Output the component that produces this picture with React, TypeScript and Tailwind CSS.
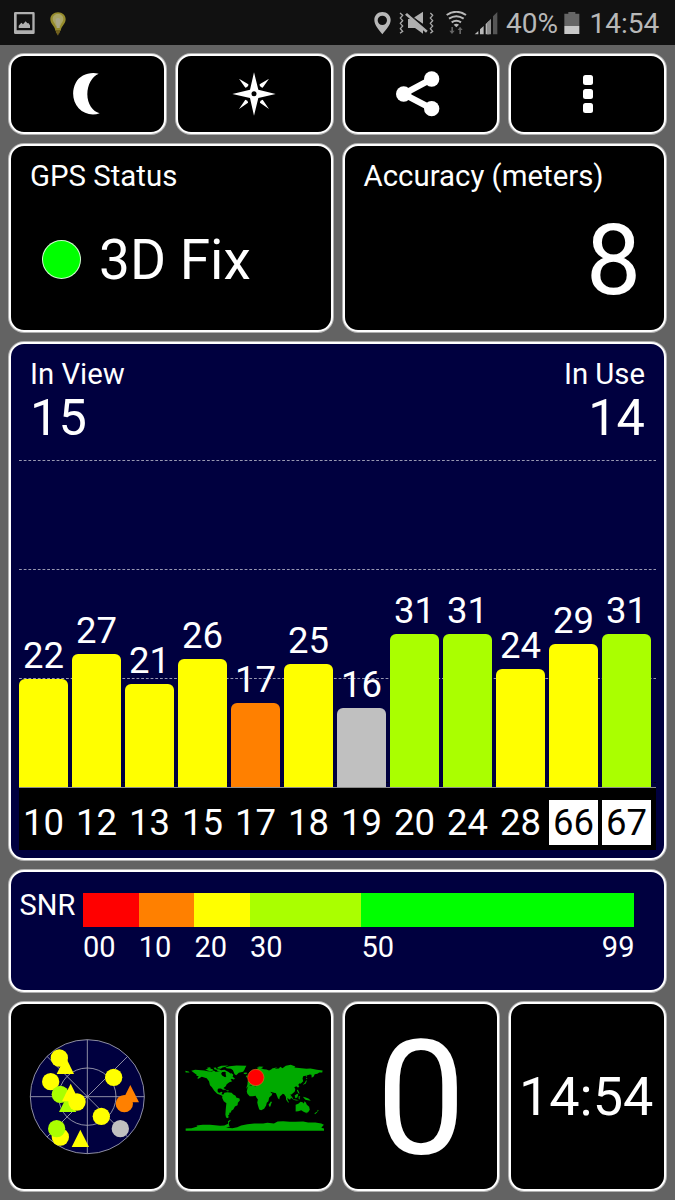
import type { ReactNode } from "react";
import clsx from "clsx";

// 4.95px per dB, so one grid step (22 dB) is 109px
const PX_PER_DB = 4.95;

const satellites = [
  { id: "10", snr: 22, color: "bg-[#ffff00]" },
  { id: "12", snr: 27, color: "bg-[#ffff00]" },
  { id: "13", snr: 21, color: "bg-[#ffff00]" },
  { id: "15", snr: 26, color: "bg-[#ffff00]" },
  { id: "17", snr: 17, color: "bg-[#ff8000]" },
  { id: "18", snr: 25, color: "bg-[#ffff00]" },
  { id: "19", snr: 16, color: "bg-[#c0c0c0]" },
  { id: "20", snr: 31, color: "bg-[#aaff00]" },
  { id: "24", snr: 31, color: "bg-[#aaff00]" },
  { id: "28", snr: 24, color: "bg-[#ffff00]" },
  { id: "66", snr: 29, color: "bg-[#ffff00]", glonass: true },
  { id: "67", snr: 31, color: "bg-[#aaff00]", glonass: true },
];

const legend = [
  { label: "00", color: "bg-[#ff0000]", width: "w-[55.7px]" },
  { label: "10", color: "bg-[#ff8000]", width: "w-[55.7px]" },
  { label: "20", color: "bg-[#ffff00]", width: "w-[55.7px]" },
  { label: "30", color: "bg-[#aaff00]", width: "w-[111.4px]" },
  { label: "50", color: "bg-[#00ff00]", width: "w-[273px]" },
];

function Panel({ className, children }: { className?: string; children: ReactNode }) {
  return (
    <div
      className={clsx(
        "rounded-[15px] border-2 border-white shadow-[0_0_0_1px_rgba(255,255,255,0.5)]",
        className
      )}
    >
      {children}
    </div>
  );
}

function StatusBar() {
  return (
    <div className="flex h-[45px] items-start bg-[#111111] pl-[14px] text-[28px] leading-none text-[#b8b8b8]">
      {/* Screenshot notification */}
      <svg className="mt-3 h-[22px] w-[21px]" viewBox="42 36 63 66">
        <path
          fill="#b0b0b0"
          fillRule="evenodd"
          d="M46 36h54q4 0 4 4v58q0 4-4 4H46q-4 0-4-4V40q0-4 4-4zM50 43v48h47V43z"
        />
        <path fill="#b0b0b0" d="M56 84v-7l8-9 5 5 8-9 5 6 3-1 5 7v8z" />
      </svg>
      {/* Light bulb notification */}
      <svg className="mt-3 ml-[15px] h-6 w-[16px]" viewBox="150 36 48 72">
        <path
          fill="#968c2c"
          d="M174 37c-13 0-23 9-23 21 0 8 4 13 9 20 3 4 5 8 6 14h16c1-6 3-10 6-14 5-7 9-12 9-20 0-12-10-21-23-21z"
        />
        <path fill="#aaa566" d="M174 42c-9 0-16 6-16 15 0 7 6 12 9 20h14c3-8 9-13 9-20 0-9-7-15-16-15z" />
        <path fill="#aaa78a" d="M167 57q7-6 14 0l-2 27h-9z" />
        <path fill="#71601e" d="M167 91h14l-2 8-3 2-1 5h-3l-1-5-3-2z" />
      </svg>

      {/* Location */}
      <svg className="mt-3 ml-[308px] h-[23px] w-[17px]" viewBox="104 36 51 69">
        <path
          fill="#b8b8b8"
          fillRule="evenodd"
          d="M129 36c-14 0-24 10-24 24 0 15 13 28 24 43 11-15 25-28 25-43 0-14-11-24-25-24zm0 11a14 14 0 1 1 0 28 14 14 0 0 1 0-28z"
        />
      </svg>
      {/* Vibrate / muted */}
      <svg className="mt-[11px] ml-2 h-6 w-[35px]" viewBox="178 33 105 72" fill="none">
        <path
          stroke="#a8a8a8"
          strokeWidth="4"
          d="M181 39l8 7-7 8 7 8-7 8 7 8-7 8 7 8-8 6M272 39l7 7-7 8 7 8-7 8 7 8-7 8 7 8-7 6"
        />
        <path fill="#b0b0b0" d="M205 57h5l40 24v20l-24-17h-21zM222 53l28-18v36zM196 44l6-5 62 53-5 6z" />
        <path stroke="#111111" strokeWidth="2" d="M205 37l60 51" />
      </svg>
      {/* Wi-Fi with traffic arrows */}
      <svg className="mt-[11px] ml-[12px] h-6 w-[21px]" viewBox="319 33 63 72" fill="none">
        <g stroke="#b8b8b8" strokeWidth="6">
          <path d="M321 45q29-19 58 0" />
          <path d="M328 56q22-15 44 0" />
          <path d="M336 67q14-10 28 0" />
        </g>
        <path fill="#b8b8b8" d="M342 74q8-6 16 0l-8 8z" />
        <path fill="#656565" d="M335 81h5v11h5l-8 10-8-10h6zM359 102h5V90h5l-8-10-7 10h5z" />
      </svg>
      {/* Mobile signal */}
      <svg className="mt-[11px] ml-[7px] h-6 w-[24px]" viewBox="402 33 72 72">
        <path fill="#b8b8b8" d="M404 103l11-10v10zM420 88l11-10v25h-11zM437 72l11-10v41h-11z" />
        <path fill="#8f8f8f" d="M441 68l12-12v47h-12z" />
        <path fill="#555555" d="M459 49l13-13v67h-13z" />
      </svg>
      <span className="mt-[10px] ml-[8px] w-[52px]">40%</span>
      <svg className="mt-3 ml-[6px] h-[22px] w-[16px]" viewBox="674 36 48 66">
        <path fill="#666666" d="M675 41h12v-5h21v5h12v37h-45z" />
        <path fill="#c8c8c8" d="M675 78h45v24h-45z" />
      </svg>
      <span className="mt-[10px] ml-[9.5px]">14:54</span>
    </div>
  );
}

function Toolbar() {
  return (
    <div className="grid grid-cols-4 gap-[10px]">
      <Panel className="flex h-20 items-center justify-center bg-black">
        <svg className="mr-px h-[42px] w-[27px]" viewBox="220 220 81 126">
          <path
            fill="white"
            d="M297 222C268 216 241 226 228 250 215 275 219 306 237 326 253 343 277 349 300 341 279 336 263 313 263 284 263 254 277 231 297 222z"
          />
        </svg>
      </Panel>
      <Panel className="flex h-20 items-center justify-center bg-black">
        <svg className="h-11 w-11" viewBox="696 217 132 132">
          <path
            fill="white"
            d="M762 218l13 52 52 13-52 12-13 53-12-53-53-12 53-13z M717 237l28 17q1 8-9 10z M807 237l-28 17q-1 8 9 10z M717 328l19-28q9 3 8 9z M807 328l-19-28q-9 3-8 9z"
          />
          <circle cx="762" cy="282.500" r="7.500" fill="black" />
        </svg>
      </Panel>
      <Panel className="flex h-20 items-center justify-center bg-black">
        <svg className="mr-[5px] h-[46px] w-11" viewBox="168 214 132 138">
          <path fill="none" stroke="white" strokeWidth="19" d="M275 238l-84 45 84 44" />
          <circle cx="275" cy="238" r="23" fill="white" />
          <circle cx="275" cy="327" r="23" fill="white" />
          <circle cx="191" cy="283" r="23" fill="white" />
        </svg>
      </Panel>
      <Panel className="flex h-20 flex-col items-center justify-center gap-1 bg-black">
        <span className="size-[10px] rounded-[2.5px] bg-white" />
        <span className="size-[10px] rounded-[2.5px] bg-white" />
        <span className="size-[10px] rounded-[2.5px] bg-white" />
      </Panel>
    </div>
  );
}

function SatelliteChart() {
  return (
    <Panel className="flex h-[518px] flex-col bg-[#00003f] px-2">
      <div className="flex justify-between px-[11px] pt-4 leading-none">
        <div>
          <p className="text-[29.3px] leading-[29px]">In View</p>
          <p className="mt-[4px] text-[50.5px] leading-[50px]">15</p>
        </div>
        <div className="text-right">
          <p className="text-[29.3px] leading-[29px]">In Use</p>
          <p className="mt-[4px] text-[50.5px] leading-[50px]">14</p>
        </div>
      </div>

      <div className="relative mt-[16px] h-[329px]">
        <svg className="absolute inset-0 h-full w-full" viewBox="0 0 637 329" preserveAspectRatio="none">
          <path
            stroke="white"
            strokeOpacity="0.6"
            strokeDasharray="2.8 1.9"
            d="M0 1.500H637M0 110.500H637M0 219.500H637"
          />
          <path stroke="black" strokeOpacity="0.6" strokeDasharray="2.8 1.9" d="M0 323.500H637" />
        </svg>
        <div className="relative flex h-full items-end gap-1 border-b border-[#8c8c8c]">
          {satellites.map((s) => (
            <div key={s.id} className="w-[49px] shrink-0">
              <p className="mb-[4.5px] text-center text-[36.5px] leading-none">{s.snr}</p>
              <div
                className={clsx("rounded-t-[6px]", s.color)}
                style={{ height: s.snr * PX_PER_DB - 0.5 }}
              />
            </div>
          ))}
        </div>
      </div>

      {/* Satellite numbers */}
      <div className="flex h-[62px] items-start gap-1 bg-black pt-[12px]">
        {satellites.map((s) => (
          <div
            key={s.id}
            className={clsx(
              "h-[45px] w-[49px] shrink-0 pt-[5px] text-center text-[36.5px] leading-none",
              s.glonass && "bg-white text-black"
            )}
          >
            {s.id}
          </div>
        ))}
      </div>
    </Panel>
  );
}

function SnrLegend() {
  return (
    <Panel className="flex h-[122px] bg-[#00003f] pt-[19px] pl-2 text-[29px] leading-none">
      <span className="w-[64px] shrink-0 pl-[0.5px]">SNR</span>
      <div className="pt-[2px]">
        <div className="flex h-[34px]">
          {legend.map((l) => (
            <div key={l.label} className={clsx(l.width, l.color)} />
          ))}
        </div>
        <div className="mt-[6px] flex">
          {legend.map((l) => (
            <div key={l.label} className={clsx("flex justify-between", l.width)}>
              <span>{l.label}</span>
              {l.label === "50" && <span>99</span>}
            </div>
          ))}
        </div>
      </div>
    </Panel>
  );
}

function Radar() {
  return (
    <svg className="h-[120px] w-[120px]" viewBox="81 111 360 360">
      <circle cx="262" cy="290" r="171" fill="#00003f" stroke="#a9a9b8" strokeWidth="2.500" />
      <g fill="none" stroke="#a9a9b8" strokeWidth="2.500">
        <circle cx="262" cy="290" r="86" />
        <path d="M91 290h342M262 119v342M141 169l242 242M383 169L141 411" />
      </g>
      <g fill="#ffff00">
        <circle cx="178" cy="174" r="26" />
        <path d="M196 169l26 53h-52z" />
        <circle cx="152" cy="245" r="26" />
        <circle cx="341" cy="232" r="26" />
        <circle cx="304" cy="349" r="26" />
        <circle cx="181" cy="411" r="26" />
        <path d="M241 389l26 52h-52z" />
      </g>
      <g fill="#aaff00">
        <circle cx="181" cy="283" r="26" />
        <circle cx="170" cy="386" r="26" />
        <path d="M203 285l26 51h-52z" />
      </g>
      <path fill="#ffff00" d="M212 251l26 53h-52z" />
      <circle cx="231" cy="306" r="26" fill="#ffff00" />
      <g fill="#ff8000">
        <circle cx="373" cy="311" r="26" />
        <path d="M391 255l26 52h-52z" />
      </g>
      <circle cx="361" cy="386" r="26" fill="#c0c0c0" />
    </svg>
  );
}

function WorldMap() {
  return (
    <svg className="h-[70px] w-[140px]" viewBox="42.500 64.500 420 210" fill="#00aa00">
      <g transform="translate(1.2 0) scale(0.985 1)">
        {/* North America */}
        <path d="M46 91l10 2 3 3-12 0zM64 91l12-3 28 2 10 2 12 1 8-2 4 3 12-1 8 2-3 5 3 5 9 5 4-3-3-8 6-3 8 4 5-2 5 5-2 6 7 5-3 3-7-2-3 3 5 4-9 3-8 6-3 6-6 5-1 7-6-5-9 0-3 4 1 7 6 2 4-3 4 1-3 6 7 2 4 6 5 1-2 2-9-3-6-5-12-4-9-9-7-11-6-6-3-12-7-9-15-4-10 6-4-2 5-6-7-1 0-4-4-2z" />
        {/* Arctic islands and Greenland */}
        <path d="M107 88l10-5 12 3 4 4-12 2zM112 82l8-2 5 3-10 2zM132 82l7-1 3 5-6 2zM139 86l10 0 6 3 10-1 14 7 8 8-7 0-8 5-3-3 5-5-8-6-12 1-9-3zM144 80l12-4 21-1-8 4-10 2-5 4-10-1z" />
        <path d="M168 81l12-4 22-2 30 1-3 5-3 7-4 6-13 3-8 7-5-3-5-12-6-4-14-2z" />
        <path d="M224 97l8-1 3 3-6 2-5-1zM155 142l9 2 7 4-7 0-9-4zM171 149l8 1-3 3-5-2z" />
        {/* South America */}
        <path d="M165 157l9-2 13 2 5 5 7 4 2 5 10 3 1 6-6 7-1 7-8 4-5 9-6 4-1 5-5 1 0 5-4 3 2 4-2 4-6-2-2-9 1-15 2-19-8-6-5-10 2-7z" />
        {/* Eurasia */}
        <path d="M235 133l1-11 10-1-1-8-4-2 7-3 8-5 3-6-4 0 2-8 14-8 14 5 8 1 8 3 6-3 10-2 14-1 4-5 7 4 10-7 15-3 14 5-3 3 22 2 15 2 12-1 20 4 17 2-1 6-9 0-6 4-8 1-3 7-6 4-1-9-5-1-7 2-13 3-2 7 2 8-8 8-3-2-4 5 3 5-5 3-4-4-6 3 3 6-2 8-10 8-5 1 4 7-2 6-4 1-5-5 1 8 4 5-3 1-6-8-1-9-5-8-4-1-9 8-2 9-4-4-6-15-9-2-8-2 5 7-8 6-9 4-5-7-7-12 1-5-10-1-5-3-4 1-5-8-3 0 3 8-4 0-6-10-5 1-8 5-4 5z" />
        <path d="M238 101l7 4 2 7-8 1 0-6zM232 105l4 0-1 5-5 0zM263 80l9-2 12 1-6 4-9-1zM306 92l4-8 16-4-9 6-4 6zM350 81l12-3 11 4-10 2z" />
        {/* Africa */}
        <path d="M237 137l17-3 5 5 9 1 4-2 14 1 5 3 7 12 4 5 9-1-2 6-8 8-2 10-5 5-2 8-6 10-9 4-6-2-4-13-2-8 2-9-5-7-2-4-9 1-9 0-7-7-2-7 2-9z" />
        <path d="M307 182l2 3-4 13-4 0-1-6z" />
        {/* South-east Asia, Japan */}
        <path d="M361 159l5 4 8 10 0 3-6-4zM375 176l11 2 6 1-8 1-10-2zM379 165l8-5 3 2-3 9-6 2zM391 167l5 0-2 5 1 5-4-2zM386 147l4 3 4 10-4-2-4-7zM404 169l9 2 9 4 6 6-9-2-7-1-4-4zM390 138l3-1-2 5zM405 131l5-4 4-8 2 2-3 8-8 4zM413 112l5 1-3 3zM413 99l3 8-2 3-2-8zM343 155l3 3-2 3z" />
        {/* Australia, New Zealand */}
        <path d="M382 193l8-3 7-6 6 1 4 4 2-7 4 4 3 7 7 6 2 9-5 7-7 2-7-3-7-5-9 3-8 1z" />
        <path d="M414 216l4 0-2 3zM450 208l2 3-4 3-1-2zM445 214l3 1-7 6-2-1z" />
        {/* Antarctica */}
        <path d="M47 264l18-1 18-5-3-3 19-2 22 0 16 1 15 2 13-1 11-5 0-8 7-4 1 2-6 6 1 8 3 4-12 3 19 2 15-3 12-5 19-4 21-2 27 0 13-2 20 2 11-6 17-1 20 2 17 0 24-1 15 3 22 0 18 3 8 4-8 9 12 3v6H47z" />
      </g>
      <circle cx="258" cy="111" r="24.500" fill="#ff0000" stroke="#c87820" strokeWidth="2" />
    </svg>
  );
}

export default function App() {
  return (
    <div className="h-[1200px] w-[675px] overflow-hidden bg-[#636363] font-['Roboto','Noto_Sans',sans-serif] text-white">
      <StatusBar />
      <div className="flex flex-col gap-[10px] px-[9px] pt-[9px]">
        <Toolbar />

        <div className="grid grid-cols-2 gap-[10px]">
          <Panel className="h-[188px] bg-black pt-4 pl-[19px]">
            <p className="text-[29.4px] leading-[29px]">GPS Status</p>
            <div className="mt-[42px] flex items-center">
              <span className="mb-[2px] ml-[12px] size-[39px] rounded-full border border-white/80 bg-[#00ff00]" />
              <span className="ml-[18px] text-[55px] leading-[55px]">3D Fix</span>
            </div>
          </Panel>
          <Panel className="h-[188px] bg-black pt-4 pl-[19px]">
            <p className="text-[29.4px] leading-[29px]">Accuracy (meters)</p>
            <p className="mt-[21px] pr-[23px] text-right text-[98px] leading-none">8</p>
          </Panel>
        </div>

        <SatelliteChart />
        <SnrLegend />

        <div className="grid grid-cols-4 gap-[10px]">
          <Panel className="flex h-[189px] items-center justify-center bg-black">
            <Radar />
          </Panel>
          <Panel className="flex h-[189px] items-center justify-center bg-black">
            <WorldMap />
          </Panel>
          <Panel className="flex h-[189px] items-center justify-center bg-black pt-[5px] text-[160px] leading-none">
            0
          </Panel>
          <Panel className="flex h-[189px] items-center justify-center bg-black pt-px pr-[3px] text-[54px] leading-none">
            14:54
          </Panel>
        </div>
      </div>
    </div>
  );
}
